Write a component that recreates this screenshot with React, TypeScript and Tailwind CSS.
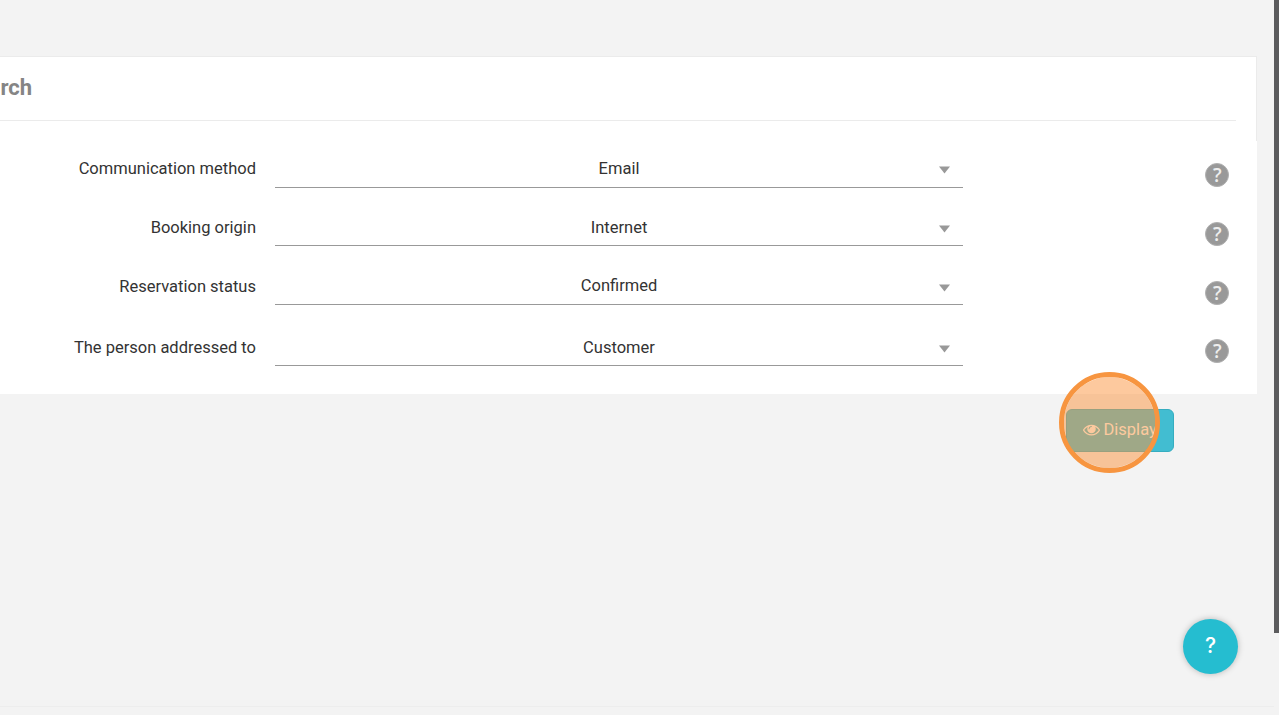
import { useState } from "react";

const fields = [
  { label: "Communication method", value: "Email", row: "h-[67px]", text: "pb-[7px]", select: "pb-[6px]", arrow: "mt-[1px]", help: "mb-[1px]" },
  { label: "Booking origin", value: "Internet", row: "h-[58px]", text: "pb-[6px]", select: "pb-[5px]", arrow: "mt-[1px]", help: "" },
  { label: "Reservation status", value: "Confirmed", row: "h-[59px]", text: "pb-[6px]", select: "pb-[6px]", arrow: "mt-[3px]", help: "" },
  { label: "The person addressed to", value: "Customer", row: "h-[61px]", text: "pb-[6px]", select: "pb-[5px]", arrow: "mt-[1px]", help: "mb-[3px]" },
];

function HelpIcon({ className }: { className: string }) {
  return (
    <span
      className={`w-6 h-6 rounded-full bg-[#999] border border-[#b0b0b0] text-[#eee] text-[19px] leading-[22px] text-center font-semibold font-['Open_Sans',sans-serif] ${className}`}
    >
      ?
    </span>
  );
}

function EyeIcon() {
  return (
    <svg viewBox="0 0 1792 1792" className="w-[17px] h-[17px]" fill="currentColor">
      <path d="M1664 960q-152-236-381-353 61 104 61 225 0 185-131.5 316.5t-316.5 131.5-316.5-131.5-131.5-316.5q0-121 61-225-229 117-381 353 133 205 333.5 326.5t434.5 121.5 434.5-121.5 333.5-326.5zm-720-384q0-20-14-34t-34-14q-125 0-214.5 89.5t-89.5 214.5q0 20 14 34t34 14 34-14 14-34q0-86 61-147t147-61q20 0 34-14t14-34zm848 384q0 34-20 69-140 230-376.5 368.5t-499.5 138.5-499.5-139-376.5-368q-20-35-20-69t20-69q140-229 376.5-368t499.5-139 499.5 139 376.5 368q20 35 20 69z" />
    </svg>
  );
}

export default function App() {
  const [shown, setShown] = useState(false);

  return (
    <div className="relative flex w-full h-[715px] overflow-hidden bg-[#f3f3f3] font-['Roboto',sans-serif] text-[16.5px] text-[#333]">
      <main className="flex flex-col flex-1 pt-14">
        {/* search panel */}
        <section className="w-[1257px] h-[338px] bg-white">
          <div className="h-[85px] border-t border-r border-[#ebebeb]">
            <h2 className="h-16 mr-5 pl-[0.5px] border-b border-[#ebebeb] text-[22px] leading-[62px] font-bold text-[#858585] whitespace-nowrap">
              rch
            </h2>
          </div>

          <div className="-mt-5">
            {fields.map((f) => (
              <div key={f.label} className={`flex items-end ${f.row}`}>
                <label className={`w-[256px] text-right leading-[24px] ${f.text}`}>{f.label}</label>
                <div className={`ml-[19px] w-[688px] flex items-center border-b border-[#999] leading-[24px] ${f.select}`}>
                  <span className="flex-1 text-center">{f.value}</span>
                  <svg viewBox="0 0 12 8" className={`absolute ml-[663px] w-3 h-2 ${f.arrow}`}>
                    <path d="M1 0.5h11L6.5 7.5z" fill="#999" />
                  </svg>
                </div>
                <HelpIcon className={`ml-[242.4px] ${f.help}`} />
              </div>
            ))}
          </div>
        </section>

        {/* display button with the click marker over it */}
        <div className="relative mt-[15px] ml-[1066px] w-[108px]">
          <button
            onClick={() => setShown(!shown)}
            className="flex items-center gap-[3.5px] w-full h-[43px] pl-4 pb-[2px] rounded-md bg-[#42bdd1] border border-[#35adc0] text-white"
          >
            <EyeIcon />
            <span className="pt-[1px]">Display</span>
          </button>
          <span className="absolute -left-[7px] -top-[37px] w-[101px] h-[101px] rounded-full border-[5px] border-[#f79540] bg-[#fb933d]/50 bg-clip-padding pointer-events-none" />
        </div>

        <footer className="mt-auto h-[9px] border-t border-[#ededed]" />
      </main>

      <div className="w-[5px] h-[633px] bg-[#5b5b5d]" />

      {/* floating help */}
      <button className="absolute left-[1183px] top-[619px] w-[55px] h-[55px] pb-[1px] rounded-full bg-[#25bdd0] shadow-[0_0_6px_rgba(0,0,0,0.25)] text-white text-[21px] leading-[52px] font-medium font-['Inter',sans-serif]">
        ?
      </button>
    </div>
  );
}
